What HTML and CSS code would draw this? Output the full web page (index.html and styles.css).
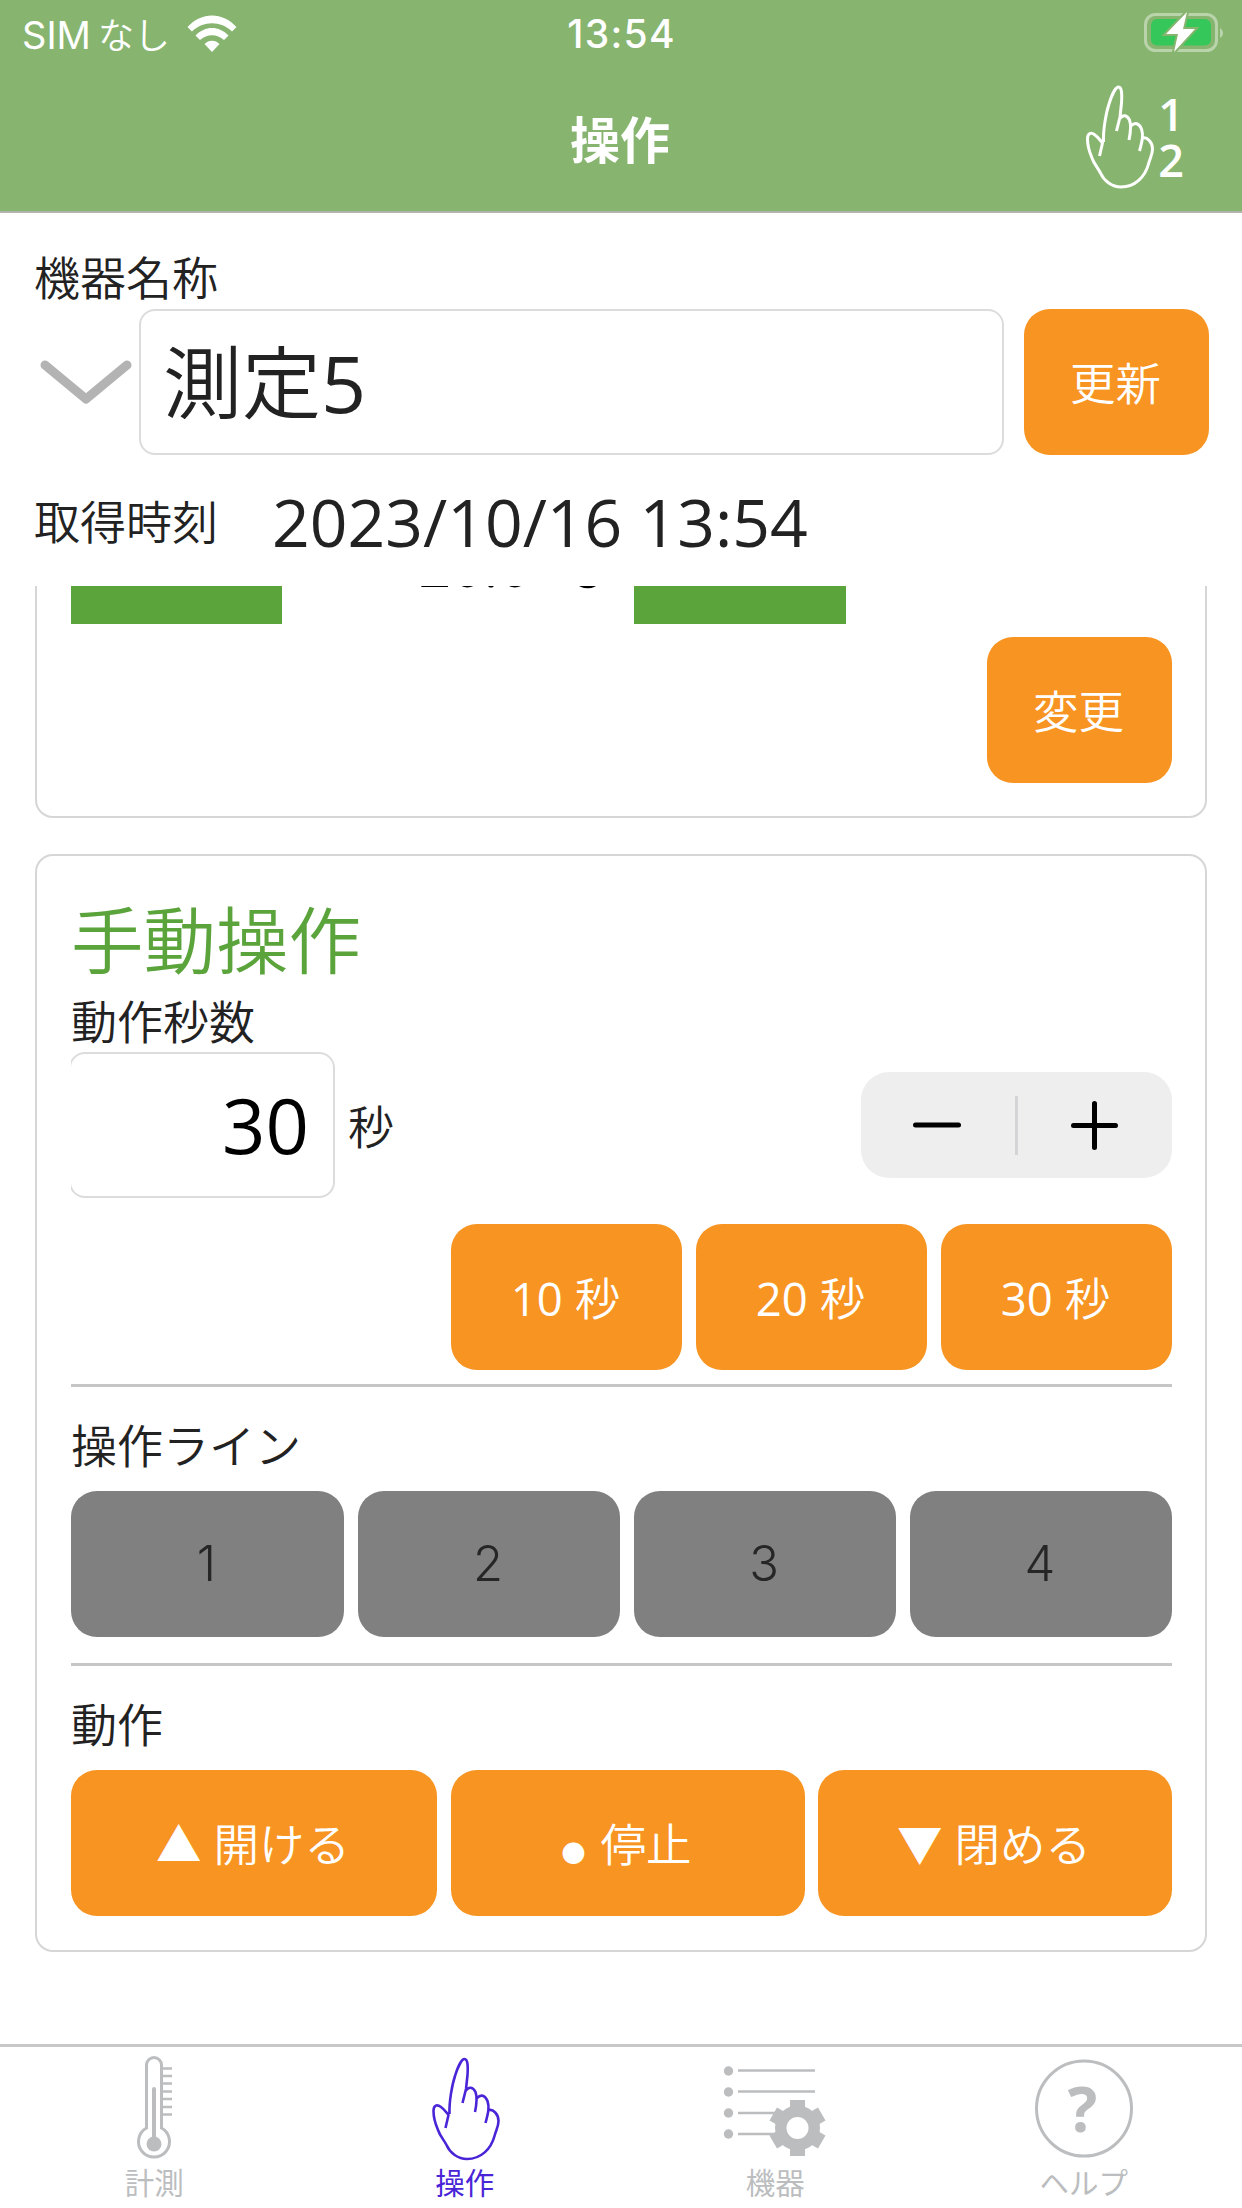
FILE: index.html
```html
<!DOCTYPE html>
<html lang="ja">
<head>
    <meta charset="UTF-8">
    <meta name="viewport" content="width=device-width, initial-scale=1.0">
    <title>操作</title>
    <link rel="stylesheet" href="styles.css">
</head>
<body>
    <svg class="defs" width="0" height="0">
        <symbol id="hand" viewBox="0 0 68 104">
            <path d="M17.500 57 C17 45 20 28 23 19 C26 9 30 2 32.500 2 C36 2 36 10 35.500 18 L34 32 L30.500 46 M33.500 34 C37 29 41 30 43.500 35 C45 39 45.500 43 43 55 M45 41 C49 37 53 38 55.500 44 C57.500 50 56.500 55 53.500 66 M57 53 C61 52 66.500 57 66.500 64 C66.500 70 64 73 62.500 79 C59 92 49 102 35 102 C26 102 18 96 14.500 88 C12 83 8 79 6 73 C3 66 1.500 60 1.500 54 C1.500 48 5 47 9 50 C12 52 14 55 16.500 58 L13.500 71"/>
        </symbol>
    </svg>

    <header class="header">
        <div class="status">
            <div class="carrier">
                <span>SIM<span class="carrier-kana">なし</span></span>
                <svg class="wifi" width="50" height="37" viewBox="0 0 50 37">
                    <path d="M0.500 12 C14 -3.500 36 -3.500 49.500 12 L45 16.500 C34 5.500 16 5.500 5 16.500 Z"/>
                    <path d="M8.500 20.500 C18 10.500 32 10.500 41.500 20.500 L37 25 C30 18.500 20 18.500 13 25 Z"/>
                    <path d="M17.500 29 C21.500 24.500 28.500 24.500 32.500 29 L25 37 Z"/>
                </svg>
            </div>
            <div class="clock">13:54</div>
            <svg class="battery" width="80" height="40" viewBox="0 0 80 40">
                <rect x="1.500" y="2.500" width="71" height="36" rx="10" class="battery-case"/>
                <rect x="7" y="7" width="60" height="26.500" rx="6" class="battery-level"/>
                <path d="M76 16 C80 18 80 24 76 26 Z" class="battery-tip"/>
                <path d="M43 0 L22 22 H34 L30 40 L51 17 H39 Z" class="battery-bolt"/>
            </svg>
        </div>
        <div class="navbar">
            <h1>操作</h1>
            <div class="nav-action">
                <svg class="hand" width="68" height="104"><use href="#hand"/></svg>
                <div class="nav-numbers"><span>1</span><span>2</span></div>
            </div>
        </div>
    </header>

    <section class="device">
        <div class="label">機器名称</div>
        <div class="device-row">
            <svg class="chevron" width="92" height="46" viewBox="0 0 92 46">
                <path d="M5 6 L46 40 L87 6"/>
            </svg>
            <div class="field device-name">測定5</div>
            <button class="btn small">更新</button>
        </div>
        <div class="time-row">
            <span class="label">取得時刻</span>
            <span class="time">2023/10/16 13:54</span>
        </div>
    </section>

    <main class="scroll">
        <div class="card setting">
            <div class="setting-row">
                <div class="tag">カーテン</div>
                <div class="value">20.0 ℃</div>
                <div class="tag">カーブ</div>
            </div>
            <button class="btn small">変更</button>
        </div>

        <div class="card manual">
            <h2>手動操作</h2>
            <div class="label">動作秒数</div>
            <div class="seconds-row">
                <div class="field seconds">30</div>
                <span class="label unit">秒</span>
                <div class="stepper">
                    <svg width="311" height="106" viewBox="0 0 311 106">
                        <path d="M54.500 53 H97.500" class="stepper-sign"/>
                        <path d="M155.500 24 V83" class="stepper-divider"/>
                        <path d="M212.500 53.500 H254.500 M233.500 31.500 V75.500" class="stepper-sign"/>
                    </svg>
                </div>
            </div>
            <div class="presets">
                <button class="btn">10 秒</button>
                <button class="btn">20 秒</button>
                <button class="btn">30 秒</button>
            </div>
            <hr>
            <div class="label section-label">操作ライン</div>
            <div class="lines">
                <button class="btn off">1</button>
                <button class="btn off">2</button>
                <button class="btn off">3</button>
                <button class="btn off">4</button>
            </div>
            <hr class="hr-lines">
            <div class="label section-label">動作</div>
            <div class="actions">
                <button class="btn"><span class="mark">▲</span>開ける</button>
                <button class="btn"><span class="mark dot">●</span>停止</button>
                <button class="btn"><span class="mark">▼</span>閉める</button>
            </div>
        </div>
    </main>

    <nav class="tabbar">
        <div class="tab">
            <svg width="104" height="110" viewBox="0 0 104 110">
                <g class="thermo">
                    <path d="M44.500 75 V12 A7.500 7.500 0 0 1 59.500 12 V75 A15.500 15.500 0 1 1 44.500 75 Z"/>
                    <path d="M52 36 V88" class="thermo-level"/>
                    <path d="M60 15.500 H70 M60 23 H70 M60 30.500 H70 M60 38.500 H70 M60 46 H70 M60 54 H70 M60 61.500 H70" class="thermo-scale"/>
                </g>
                <circle cx="52" cy="91" r="7.500" class="solid"/>
            </svg>
            <span>計測</span>
        </div>
        <div class="tab active">
            <svg width="104" height="110" viewBox="0 0 104 110">
                <use href="#hand" x="19" y="4" width="68" height="104" class="hand-active"/>
            </svg>
            <span>操作</span>
        </div>
        <div class="tab">
            <svg width="104" height="110" viewBox="0 0 104 110">
                <path d="M15 17.500 H92 M15 38.500 H92 M15 60 H52 M15 81 H52" class="list-line"/>
                <g class="solid">
                    <circle cx="5.500" cy="18" r="4.700"/>
                    <circle cx="5.500" cy="39" r="4.700"/>
                    <circle cx="5.500" cy="60" r="4.700"/>
                    <circle cx="5.500" cy="81" r="4.700"/>
                    <circle cx="74.500" cy="75" r="22.500"/>
                    <rect x="67" y="47" width="15" height="56"/>
                    <rect x="67" y="47" width="15" height="56" transform="rotate(60 74.500 75)"/>
                    <rect x="67" y="47" width="15" height="56" transform="rotate(120 74.500 75)"/>
                </g>
                <circle cx="74.500" cy="75" r="11" class="gear-hole"/>
            </svg>
            <span>機器</span>
        </div>
        <div class="tab">
            <svg width="104" height="110" viewBox="0 0 104 110">
                <circle cx="52" cy="55.500" r="47.500" class="help-ring"/>
                <text x="50.500" y="79" text-anchor="middle" class="help-mark">?</text>
            </svg>
            <span>ヘルプ</span>
        </div>
    </nav>
</body>
</html>
```
FILE: styles.css
```css
* {
    box-sizing: border-box;
}
body {
    font-family: "Open Sans", "Noto Sans CJK JP DemiLight", "Noto Sans CJK JP", sans-serif;
    display: flex;
    flex-direction: column;
    width: 1242px;
    height: 2208px;
    margin: 0;
    overflow: hidden;
    background-color: #fff;
    color: #222;
}
h1, h2 {
    margin: 0;
}
svg {
    display: block;
    flex: none;
}
.defs {
    display: none;
}

/* header */
.header {
    height: 213px;
    background-color: #87b570;
    border-bottom: 2px solid #b0b3ae;
    color: #fff;
}
.status {
    display: grid;
    grid-template-columns: 1fr auto 1fr;
    align-items: center;
    height: 66px;
    padding: 0 18px 0 22px;
    font-family: Inter, "Noto Sans CJK JP", sans-serif;
    font-size: 38px;
}
.carrier {
    display: flex;
    align-items: center;
    gap: 17px;
}
.carrier-kana {
    font-family: "Noto Sans CJK JP DemiLight", "Noto Sans CJK JP", sans-serif;
    font-size: 36px;
    margin-left: 7px;
}
.wifi {
    fill: #fff;
}
.clock {
    padding: 0 3px 0 0;
    font-size: 39px;
    font-weight: 500;
    letter-spacing: 1.3px;
}
.battery {
    justify-self: end;
    margin-bottom: 3px;
}
.battery-case {
    fill: none;
    stroke: #b9d3ab;
    stroke-width: 3;
}
.battery-level {
    fill: #35c759;
}
.battery-tip {
    fill: #b9d3ab;
}
.battery-bolt {
    fill: #fff;
    stroke: #87b570;
    stroke-width: 4;
    paint-order: stroke;
}
.navbar {
    display: grid;
    grid-template-columns: 1fr auto 1fr;
    align-items: center;
    height: 142px;
    padding: 0 58px;
}
.navbar h1 {
    grid-column: 2;
    padding-right: 2px;
    font-family: "Noto Sans CJK JP", sans-serif;
    font-size: 50px;
    font-weight: 700;
}
.nav-action {
    display: flex;
    justify-content: flex-end;
    align-items: center;
    gap: 4px;
}
.hand {
    fill: none;
    stroke: #fff;
    stroke-width: 3;
    stroke-linejoin: round;
}
.nav-numbers {
    display: flex;
    flex-direction: column;
    font-size: 45px;
    font-weight: 600;
    line-height: 46px;
}

/* device name and time */
.label {
    font-family: "Noto Sans CJK JP DemiLight", "Noto Sans CJK JP", sans-serif;
    font-size: 46px;
    font-weight: 300;
    line-height: 54px;
}
.device {
    height: 373px;
    padding: 34px 33px 0 34px;
}
.device > .label {
    height: 62px;
    padding-top: 1px;
}
.device-row {
    display: flex;
    align-items: center;
}
.chevron {
    margin: 0 7px 0 6px;
    fill: none;
    stroke: #b3b3b3;
    stroke-width: 9;
    stroke-linecap: round;
    stroke-linejoin: round;
}
.field {
    display: flex;
    align-items: center;
    height: 146px;
    border: 2px solid #dcdcdc;
    border-radius: 16px;
    background-color: #fff;
    font-size: 79px;
    line-height: 1;
}
.device-name {
    width: 865px;
    margin-right: 20px;
    padding: 0 22px;
}
.time-row {
    display: flex;
    align-items: center;
    height: 132px;
    gap: 54px;
}
.time-row .label {
    padding-bottom: 4px;
}
.time {
    font-size: 66px;
    line-height: 1;
}

/* buttons */
.btn {
    height: 146px;
    padding: 0 2px 2px 0;
    border: none;
    border-radius: 26px;
    background-color: #f79422;
    color: #fff;
    font-family: "Open Sans", "Noto Sans CJK JP DemiLight", "Noto Sans CJK JP", sans-serif;
    font-size: 45.5px;
    cursor: pointer;
}
.btn.small {
    width: 185px;
}
.btn.off {
    background-color: #808080;
    color: #262626;
    font-family: Inter, sans-serif;
    font-size: 49px;
    font-weight: 300;
}

/* cards */
.scroll {
    flex: 1;
    overflow: hidden;
}
.card {
    margin: 0 35px;
    padding: 0 33px 0 34px;
    border: 2px solid #d6d6d6;
    border-radius: 18px;
}
.setting {
    display: flex;
    flex-direction: column;
    align-items: flex-end;
    height: 332px;
    margin-top: -100px;
    padding-top: 22px;
}
.setting-row {
    display: grid;
    grid-template-columns: 211px 352px 212px;
    align-self: flex-start;
    height: 114px;
    margin-bottom: 13px;
}
.tag {
    padding-left: 15px;
    background-color: #5ba43c;
    color: #fff;
    font-size: 46px;
    line-height: 106px;
}
.value {
    padding-right: 31px;
    text-align: right;
    font-size: 57px;
    line-height: 110px;
    color: #000;
}
.manual {
    height: 1098px;
    margin-top: 36px;
    padding-top: 36px;
}
.manual h2 {
    height: 100px;
    font-family: "Noto Sans CJK JP DemiLight", "Noto Sans CJK JP", sans-serif;
    font-size: 72.5px;
    font-weight: 300;
    line-height: 90px;
    color: #5ba43c;
}
.manual > .label {
    height: 60px;
}
.seconds-row {
    display: flex;
    align-items: center;
    overflow: hidden;
}
.seconds {
    justify-content: flex-end;
    width: 266px;
    margin-left: -2px;
    padding-right: 24px;
    color: #000;
    font-size: 76px;
}
.unit {
    margin-left: 13px;
    padding-bottom: 3px;
}
.stepper {
    width: 311px;
    height: 106px;
    margin-left: auto;
    border-radius: 28px;
    background-color: #eee;
}
.stepper-sign {
    stroke: #000;
    stroke-width: 5;
    stroke-linecap: round;
}
.stepper-divider {
    stroke: #d4d4d6;
    stroke-width: 3;
}
.presets {
    display: grid;
    grid-template-columns: repeat(3, 231px);
    justify-content: end;
    gap: 14px;
    margin-top: 26px;
}
hr {
    height: 3px;
    margin: 14px 0 0;
    border: none;
    background-color: #c6c6c6;
}
.hr-lines {
    margin-top: 26px;
}
.manual .section-label {
    height: 104px;
    padding-top: 29px;
}
.lines {
    display: grid;
    grid-template-columns: 273px 262px 262px 262px;
    justify-content: space-between;
}
.actions {
    display: grid;
    grid-template-columns: 366px 354px 354px;
    justify-content: space-between;
}
.mark {
    margin-right: 12px;
    font-family: "Noto Sans CJK JP", sans-serif;
}
.dot {
    font-size: 24px;
    margin-right: 15px;
}

/* tab bar */
.tabbar {
    display: flex;
    height: 164px;
    border-top: 3px solid #c8c8c8;
    background-color: #fff;
}
.tab {
    display: flex;
    flex: 1;
    flex-direction: column;
    align-items: center;
    padding-top: 6px;
    color: #bbbdbf;
    font-family: "Noto Sans CJK JP", sans-serif;
    font-size: 29.5px;
    line-height: 40px;
}
.tab span {
    margin-top: -2px;
}
.tab:nth-child(n+2) {
    padding-left: 2px;
}
.tab:last-child {
    padding: 6px 4px 0 0;
}
.active {
    color: #4a25d8;
}
.solid {
    fill: #bbbdbf;
}
.thermo {
    fill: none;
    stroke: #bbbdbf;
    stroke-width: 3;
}
.thermo-level {
    stroke-width: 4;
    stroke-linecap: round;
}
.thermo-scale {
    stroke-width: 2.5;
}
.hand-active {
    fill: none;
    stroke: #4a25d8;
    stroke-width: 2.6;
    stroke-linejoin: round;
}
.list-line {
    fill: none;
    stroke: #bbbdbf;
    stroke-width: 2.5;
}
.gear-hole {
    fill: #fff;
}
.help-ring {
    fill: none;
    stroke: #bbbdbf;
    stroke-width: 3;
}
.help-mark {
    fill: #bbbdbf;
    font-family: "Open Sans", sans-serif;
    font-size: 62px;
    font-weight: 700;
}
```
